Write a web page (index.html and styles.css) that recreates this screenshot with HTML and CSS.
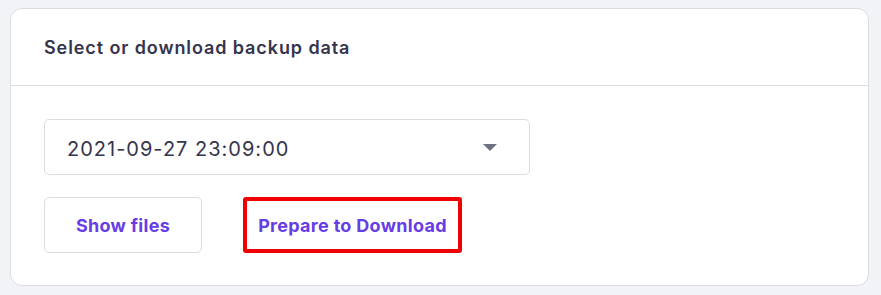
FILE: index.html
```html
<!DOCTYPE html>
<html>
<head>
    <meta charset="utf-8">
    <link rel="stylesheet" href="styles.css">
</head>
<body>
    <div class="card">
        <!-- card header -->
        <div class="card-header">
            <h3 class="card-title">Select or download backup data</h3>
        </div>

        <!-- backup picker -->
        <div class="card-body">
            <div class="select">
                <span class="select-value">2021-09-27 23:09:00</span>
                <span class="caret"></span>
            </div>
            <div class="actions">
                <button class="btn btn-outline">Show files</button>
                <button class="btn btn-highlight">Prepare to Download</button>
            </div>
        </div>
    </div>
</body>
</html>
```

FILE: styles.css
```css
/* page */
body {
    margin: 0;
    background-color: #f2f3f6;
    font-family: Inter, "Noto Sans", sans-serif;
    color: #36344d;
}

/* card */
.card {
    margin: 8px 0 0 10px;
    width: 859px;
    height: 278px;
    background-color: #fff;
    border: 1px solid #dcdde3;
    border-radius: 12px;
    box-sizing: border-box;
}

.card-header {
    height: 76px;
    padding: 0 33px;
    display: flex;
    align-items: center;
    border-bottom: 1px solid #dcdde3;
}

.card-title {
    margin: 0;
    font-size: 18px;
    font-weight: 600;
    letter-spacing: 0.9px;
}

.card-body {
    padding: 33px 33px 0 33px;
}

/* dropdown */
.select {
    width: 486px;
    height: 56px;
    box-sizing: border-box;
    border: 1px solid #dcdde3;
    border-radius: 5px;
    display: flex;
    align-items: center;
    justify-content: space-between;
    padding: 0 32px 0 22px;
}

.select-value {
    padding-top: 4px;
    font-size: 20px;
    font-weight: 400;
    letter-spacing: 1px;
    color: #36344d;
}

.caret {
    width: 0;
    height: 0;
    border-left: 7px solid transparent;
    border-right: 7px solid transparent;
    border-top: 7px solid #6d7081;
}

/* buttons */
.actions {
    display: flex;
    gap: 41px;
    margin-top: 22px;
}

.btn {
    height: 56px;
    padding: 0;
    background-color: #fff;
    color: #673de6;
    font-family: inherit;
    font-size: 18px;
    font-weight: 700;
    letter-spacing: 0.3px;
    cursor: pointer;
    box-sizing: border-box;
}

.btn-outline {
    width: 158px;
    border: 1px solid #dcdde3;
    border-radius: 5px;
}

.btn-highlight {
    width: 219px;
    border: 4px solid #f00000;
    border-radius: 3px;
}
```
